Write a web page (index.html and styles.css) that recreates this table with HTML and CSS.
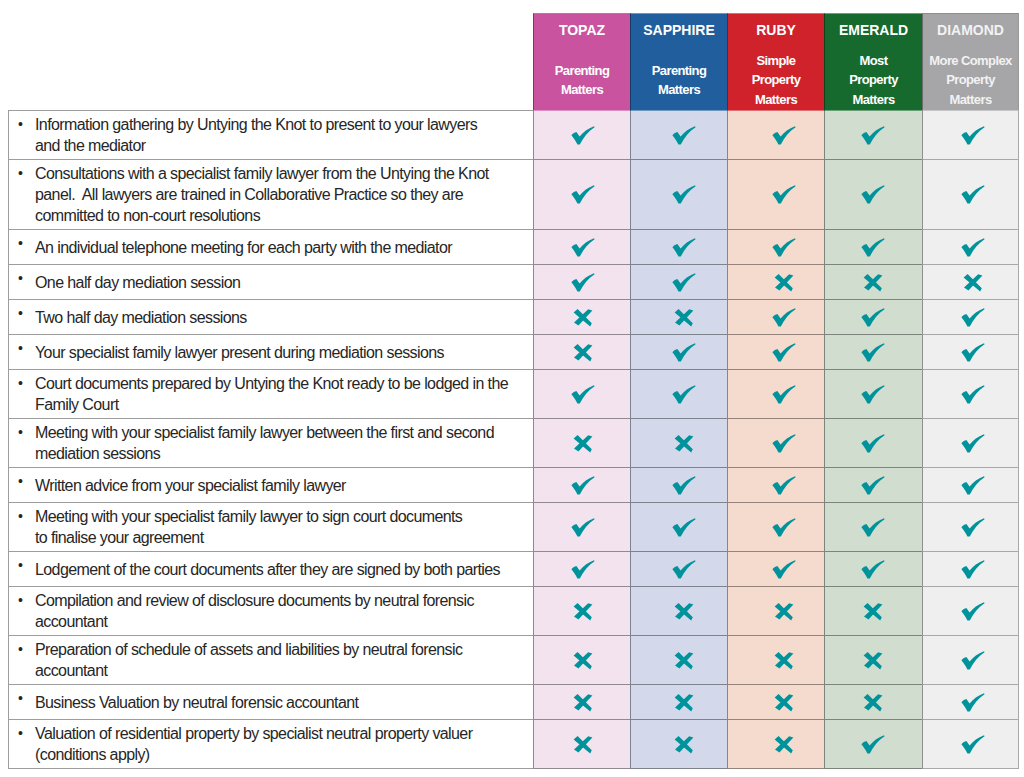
FILE: index.html
```html
<!DOCTYPE html>
<html lang="en">
<head>
<meta charset="utf-8">
<title>Untying the Knot packages</title>
<link rel="stylesheet" href="styles.css">
</head>
<body>
<svg width="0" height="0" class="defs" aria-hidden="true">
  <defs>
    <symbol id="tick" viewBox="0 0 24 19">
      <path d="M0.4,9.2 C2,7.4 3.6,6.2 5.4,5.9 L8.6,10.6 C12,6.4 17,2.4 23,0.3 L23.6,1.3 C17.5,5.2 12.6,11 8.8,18.6 L6.4,18.6 C4.8,15 2.8,12 0.4,9.2 Z"/>
    </symbol>
    <symbol id="cross" viewBox="0 0 20 19">
      <path d="M0.6,4.6 L4.6,1 L18.8,15.2 L17.2,18.4 L13.6,15.4 Z"/>
      <path d="M15.2,1.2 L19.4,2.6 L5.4,17.6 L1,14.6 Z"/>
    </symbol>
  </defs>
</svg>

<div class="chart">
  <div class="corner"></div>
  <div class="head topaz"><div class="title">TOPAZ</div><div class="sub">Parenting<br>Matters</div></div>
  <div class="head sapphire"><div class="title">SAPPHIRE</div><div class="sub">Parenting<br>Matters</div></div>
  <div class="head ruby"><div class="title">RUBY</div><div class="sub">Simple<br>Property<br>Matters</div></div>
  <div class="head emerald"><div class="title">EMERALD</div><div class="sub">Most<br>Property<br>Matters</div></div>
  <div class="head diamond"><div class="title">DIAMOND</div><div class="sub">More Complex<br>Property<br>Matters</div></div>
</div>
<div class="chart" id="rows"></div>

<script>
const rows = [
  ["Information gathering by Untying the Knot to present to your lawyers<br>and the mediator", "yyyyy"],
  ["Consultations with a specialist family lawyer from the Untying the Knot<br>panel.&nbsp; All lawyers are trained in Collaborative Practice so they are<br>committed to non-court resolutions", "yyyyy"],
  ["An individual telephone meeting for each party with the mediator", "yyyyy"],
  ["One half day mediation session", "yynnn"],
  ["Two half day mediation sessions", "nnyyy"],
  ["Your specialist family lawyer present during mediation sessions", "nyyyy"],
  ["Court documents prepared by Untying the Knot ready to be lodged in the<br>Family Court", "yyyyy"],
  ["Meeting with your specialist family lawyer between the first and second<br>mediation sessions", "nnyyy"],
  ["Written advice from your specialist family lawyer", "yyyyy"],
  ["Meeting with your specialist family lawyer to sign court documents<br>to finalise your agreement", "yyyyy"],
  ["Lodgement of the court documents after they are signed by both parties", "yyyyy"],
  ["Compilation and review of disclosure documents by neutral forensic<br>accountant", "nnnny"],
  ["Preparation of schedule of assets and liabilities by neutral forensic<br>accountant", "nnnny"],
  ["Business Valuation by neutral forensic accountant", "nnnny"],
  ["Valuation of residential property by specialist neutral property valuer<br>(conditions apply)", "nnnyy"]
];
const cols = ["topaz", "sapphire", "ruby", "emerald", "diamond"];
const host = document.getElementById("rows");
let html = "";
rows.forEach(([text, marks]) => {
  html += '<div class="item"><span class="bullet">•</span><span class="text">' + text + '</span></div>';
  cols.forEach((c, i) => {
    const yes = marks[i] === "y";
    html += '<div class="mark ' + c + '"><svg class="' + (yes ? "tick" : "cross") + '"><use href="#' + (yes ? "tick" : "cross") + '"/></svg></div>';
  });
});
host.innerHTML = html;
</script>
</body>
</html>
```
FILE: styles.css
```css
* { box-sizing: border-box; }

body {
  margin: 0;
  background: #ffffff;
  font-family: "Liberation Sans", Arial, sans-serif;
  color: #262626;
}

.defs { position: absolute; width: 0; height: 0; }

.chart {
  display: grid;
  grid-template-columns: 525px 97px 97px 97px 98px 97px;
  width: 1011px;
  margin-left: 8px;
}

.chart:first-of-type { margin-top: 13px; }

.corner {
  border-bottom: 1px solid #9d9d9d;
}

.head {
  height: 98px;
  display: flex;
  flex-direction: column;
  align-items: center;
  color: #ffffff;
  border-top: 1px solid #8e8e8e;
  border-left: 1px solid rgba(0, 0, 0, 0.35);
  border-bottom: 1px solid rgba(255, 255, 255, 0.35);
  text-align: center;
}

.head.diamond { border-right: 1px solid #9a9a9a; color: #f2f2f2; }

.title {
  height: 32px;
  display: flex;
  align-items: center;
  font-weight: bold;
  font-size: 14px;
}

.sub {
  flex: 1;
  display: flex;
  align-items: center;
  font-weight: bold;
  font-size: 13px;
  letter-spacing: -0.6px;
  line-height: 19.5px;
  white-space: nowrap;
  padding-top: 4px;
}

.head.topaz { background: #c9539f; }
.head.sapphire { background: #215e9d; }
.head.ruby { background: #d0222a; }
.head.emerald { background: #176a2d; }
.head.diamond { background: #a6a6a8; }

.item {
  min-height: 35px;
  display: flex;
  align-items: center;
  padding: 3px 4px 3px 9px;
  border-left: 1px solid #9d9d9d;
  border-bottom: 1px solid #9d9d9d;
  font-size: 16px;
  line-height: 21px;
  letter-spacing: -0.6px;
  white-space: nowrap;
}

.bullet {
  width: 17px;
  flex: none;
  align-self: flex-start;
  font-size: 14px;
  line-height: 21px;
}

.mark {
  display: flex;
  align-items: center;
  justify-content: center;
  border-left: 1px solid rgba(0, 0, 0, 0.4);
  border-bottom: 1px solid rgba(0, 0, 0, 0.4);
}

.mark.topaz { background: #f3e3ee; padding-left: 1px; }
.mark.sapphire { background: #d3d9ea; padding-left: 9px; }
.mark.ruby { background: #f5dbcd; padding-left: 15px; }
.mark.emerald { background: #d1ddcf; padding-right: 1px; }
.mark.diamond { background: #efefef; padding-left: 5px; border-right: 1px solid #a8a8a8; border-bottom-color: #a8a8a8; }

.tick { width: 24px; height: 19px; fill: #00939b; }
.cross { width: 20px; height: 19px; fill: #00939b; }
```
